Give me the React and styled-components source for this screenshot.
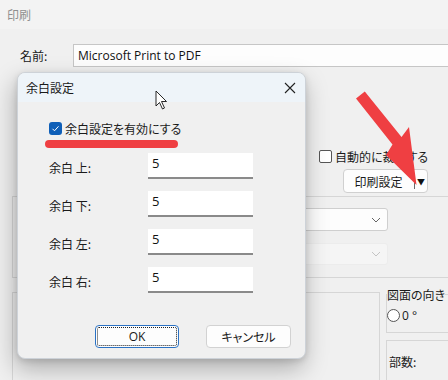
import React from "react";
import styled, { createGlobalStyle } from "styled-components";

const GlobalStyle = createGlobalStyle`
	html, body {
		margin: 0;
		padding: 0;
		background: #f0f0f0;
	}
	body {
		font-family: "Noto Sans CJK JP", "Noto Sans", sans-serif;
		font-size: 12px;
		color: #1a1a1a;
		font-feature-settings: "palt";
	}
`;

const Window = styled.div`
	position: relative;
	width: 448px;
	height: 380px;
	overflow: hidden;
	background: #f0f0f0;
`;

const TitleBar = styled.div`
	height: 29px;
	background: #f3f3f3;
	color: #8f8f8f;
	padding-left: 7px;
	display: flex;
	align-items: center;
	font-size: 12px;
`;

const NameRow = styled.div`
	display: flex;
	align-items: center;
	margin-top: 15px;
	padding-left: 20px;
	height: 23px;
`;

const NameLabel = styled.div`
	width: 53px;
	font-size: 12px;
`;

const PrinterField = styled.div`
	flex: 1;
	margin-right: -20px;
	height: 21px;
	background: #fdfdfd;
	border: 1px solid #c6c6c6;
	display: flex;
	align-items: center;
	padding-left: 4px;
	font-family: "Open Sans", "Noto Sans", sans-serif;
	font-size: 12px;
	color: #111;
`;

const Options = styled.div`
	display: flex;
	flex-direction: column;
	align-items: flex-start;
	margin: 82px 0 0 319px;
	gap: 6px;
`;

const AutoCheck = styled.label`
	display: flex;
	align-items: center;
	gap: 3px;
	height: 14px;
	font-size: 12px;
`;

const EmptyBox = styled.span`
	width: 11px;
	height: 11px;
	border: 1px solid #555;
	border-radius: 2px;
	background: #fff;
`;

const SplitButton = styled.div`
	margin-left: 24px;
	width: 83px;
	height: 22px;
	border: 1px solid #d0d0d0;
	border-radius: 4px;
	background: #fdfdfd;
	display: flex;
	align-items: stretch;
`;

const SplitMain = styled.div`
	flex: 1;
	display: flex;
	align-items: center;
	justify-content: center;
	font-size: 12px;
	border-right: 1px solid #6a6a6a;
	margin: 3px 0;
	padding-right: 1px;
`;

const SplitArrow = styled.div`
	width: 12px;
	display: flex;
	align-items: center;
	justify-content: center;
	font-size: 8px;
	color: #111;
`;

const GroupTop = styled.div`
	margin: 3px 0 0 12px;
	height: 82px;
	border: 1px solid #d6d6d6;
	border-right: none;
	display: flex;
	flex-direction: column;
	align-items: flex-end;
	padding-right: 60px;
	padding-top: 11px;
	gap: 12px;
	box-sizing: border-box;
`;

const Combo = styled.div`
	width: 290px;
	height: ${(p) => (p.disabled ? "22px" : "23px")};
	border: 1px solid ${(p) => (p.disabled ? "#ececec" : "#cfcfcf")};
	border-radius: 3px;
	background: ${(p) => (p.disabled ? "#f5f5f5" : "#fdfdfd")};
	display: flex;
	align-items: center;
	justify-content: flex-end;
	padding-right: 6px;
	box-sizing: border-box;
	color: ${(p) => (p.disabled ? "#c2c2c2" : "#555")};
`;

const LowerRow = styled.div`
	display: flex;
	margin: 14px 0 0 12px;
	gap: 6px;
`;

const LeftPanel = styled.div`
	width: 368px;
	height: 100px;
	border: 1px solid #d6d6d6;
	box-sizing: border-box;
`;

const RightColumn = styled.div`
	flex: 1;
	display: flex;
	flex-direction: column;
	gap: 7px;
	margin-top: -6px;
`;

const Orientation = styled.fieldset`
	margin: 0 -20px 0 0;
	padding: 2px 0 0 0;
	height: 47px;
	border: 1px solid #d6d6d6;
	border-right: none;
	box-sizing: border-box;
	min-width: 0;
`;

const Legend = styled.legend`
	padding: 0;
	margin-left: 0;
	font-size: 12px;
	white-space: nowrap;
`;

const RadioRow = styled.div`
	display: flex;
	align-items: center;
	gap: 2px;
	font-family: "Open Sans", "Noto Sans", sans-serif;
	font-size: 12px;
	margin-top: 2px;
`;

const RadioCircle = styled.span`
	width: 11px;
	height: 11px;
	border: 1px solid #555;
	border-radius: 50%;
	background: #fff;
`;

const CopiesBox = styled.div`
	margin-right: -20px;
	height: 50px;
	border: 1px solid #d6d6d6;
	border-right: none;
	padding: 12px 0 0 2px;
	box-sizing: border-box;
	font-size: 12px;
`;

/* dialog */

const Dialog = styled.div`
	position: absolute;
	left: 17px;
	top: 72px;
	width: 289px;
	height: 287px;
	box-sizing: border-box;
	border: 1px solid #cdd2d8;
	border-radius: 8px;
	background: #f0f0f0;
	box-shadow: -2px 10px 24px rgba(0, 0, 0, 0.28), 0 2px 6px rgba(0, 0, 0, 0.12);
	overflow: hidden;
`;

const DialogTitle = styled.div`
	height: 29px;
	background: #eef4f9;
	display: flex;
	align-items: center;
	justify-content: space-between;
	padding: 0 9px 0 8px;
	font-size: 12px;
`;

const CloseIcon = styled.svg`
	width: 12px;
	height: 12px;
`;

const DialogBody = styled.div`
	position: relative;
	padding: 19px 14px 0 31px;
`;

const EnableCheck = styled.label`
	display: flex;
	align-items: center;
	gap: 3px;
	height: 14px;
	font-size: 12px;
`;

const CheckedBox = styled.span`
	width: 13px;
	height: 13px;
	border-radius: 3px;
	background: #0f5fb8;
	display: flex;
	align-items: center;
	justify-content: center;
`;

const Highlight = styled.div`
	position: absolute;
	left: 27px;
	top: 38px;
	width: 133px;
	height: 8px;
	border-radius: 4px;
	background: #ef3f42;
`;

const MarginForm = styled.div`
	display: grid;
	grid-template-columns: 99px 105px;
	grid-auto-rows: 26px;
	row-gap: 12px;
	margin-top: 18px;
`;

const MarginLabel = styled.div`
	display: flex;
	align-items: center;
	font-size: 12px;
	padding-top: 2px;
`;

const MarginInput = styled.div`
	background: #fff;
	border-bottom: 2px solid #8a8a8a;
	box-sizing: border-box;
	padding: 3px 0 0 4px;
	font-family: "Open Sans", "Noto Sans", sans-serif;
	font-size: 13px;
	line-height: 15px;
	color: #111;
`;

const ButtonRow = styled.div`
	display: flex;
	justify-content: flex-end;
	gap: 27px;
	margin-top: 32px;
`;

const DialogButton = styled.button`
	width: ${(p) => (p.primary ? "84px" : "85px")};
	height: 23px;
	box-sizing: border-box;
	border-radius: 4px;
	border: 1px solid ${(p) => (p.primary ? "#2b72c4" : "#d2d2d2")};
	background: #fdfdfd;
	font-family: ${(p) =>
		p.primary
			? `"Open Sans", "Noto Sans", sans-serif`
			: `"Noto Sans CJK JP", sans-serif`};
	font-size: 12px;
	color: #1a1a1a;
	padding: 0;
	position: relative;
	outline: ${(p) => (p.primary ? "1px dotted #222" : "none")};
	outline-offset: -3px;
	font-feature-settings: "palt";
`;

const Overlay = styled.svg`
	position: absolute;
	left: 0;
	top: 0;
	pointer-events: none;
`;

const rows = ["上", "下", "左", "右"];

export default function App() {
	return (
		<>
			<GlobalStyle />
			<Window>
				<TitleBar>印刷</TitleBar>
				<NameRow>
					<NameLabel>名前:</NameLabel>
					<PrinterField>Microsoft Print to PDF</PrinterField>
				</NameRow>
				<Options>
					<AutoCheck>
						<EmptyBox />
						自動的に裁断する
					</AutoCheck>
					<SplitButton>
						<SplitMain>印刷設定</SplitMain>
						<SplitArrow>▼</SplitArrow>
					</SplitButton>
				</Options>
				<GroupTop>
					<Combo>
						<svg width="10" height="6" viewBox="0 0 10 6">
							<path d="M1 1l4 4 4-4" fill="none" stroke="#666" strokeWidth="1" />
						</svg>
					</Combo>
					<Combo disabled>
						<svg width="10" height="6" viewBox="0 0 10 6">
							<path d="M1 1l4 4 4-4" fill="none" stroke="#c4c4c4" strokeWidth="1" />
						</svg>
					</Combo>
				</GroupTop>
				<LowerRow>
					<LeftPanel />
					<RightColumn>
						<Orientation>
							<Legend>図面の向き</Legend>
							<RadioRow>
								<RadioCircle />0 °
							</RadioRow>
						</Orientation>
						<CopiesBox>部数:</CopiesBox>
					</RightColumn>
				</LowerRow>

				<Dialog>
					<DialogTitle>
						余白設定
						<CloseIcon viewBox="0 0 12 12">
							<path d="M1 1l10 10M11 1L1 11" stroke="#222" strokeWidth="1.1" />
						</CloseIcon>
					</DialogTitle>
					<DialogBody>
						<EnableCheck>
							<CheckedBox>
								<svg width="9" height="9" viewBox="0 0 9 9">
									<path d="M1.5 4.8l2 2 4-4.5" fill="none" stroke="#fff" strokeWidth="1" />
								</svg>
							</CheckedBox>
							余白設定を有効にする
						</EnableCheck>
						<Highlight />
						<MarginForm>
							{rows.map((r) => (
								<React.Fragment key={r}>
									<MarginLabel>余白 {r}:</MarginLabel>
									<MarginInput>5</MarginInput>
								</React.Fragment>
							))}
						</MarginForm>
						<ButtonRow>
							<DialogButton primary>OK</DialogButton>
							<DialogButton>キャンセル</DialogButton>
						</ButtonRow>
					</DialogBody>
				</Dialog>

				<Overlay width="448" height="380" viewBox="0 0 448 380">
					<path
						d="M156 91 L156 106 L159.5 102.5 L162.5 109 L164.5 108 L161.5 101.5 L166.5 101.5 Z"
						fill="#fff"
						stroke="#111"
						strokeWidth="0.9"
						strokeLinejoin="round"
					/>
					<polygon
						points="356,98.5 364.8,91.6 401.5,137 409,127 416.5,185 386,155 392.5,144.5"
						fill="#ef3f42"
					/>
				</Overlay>
			</Window>
		</>
	);
}
